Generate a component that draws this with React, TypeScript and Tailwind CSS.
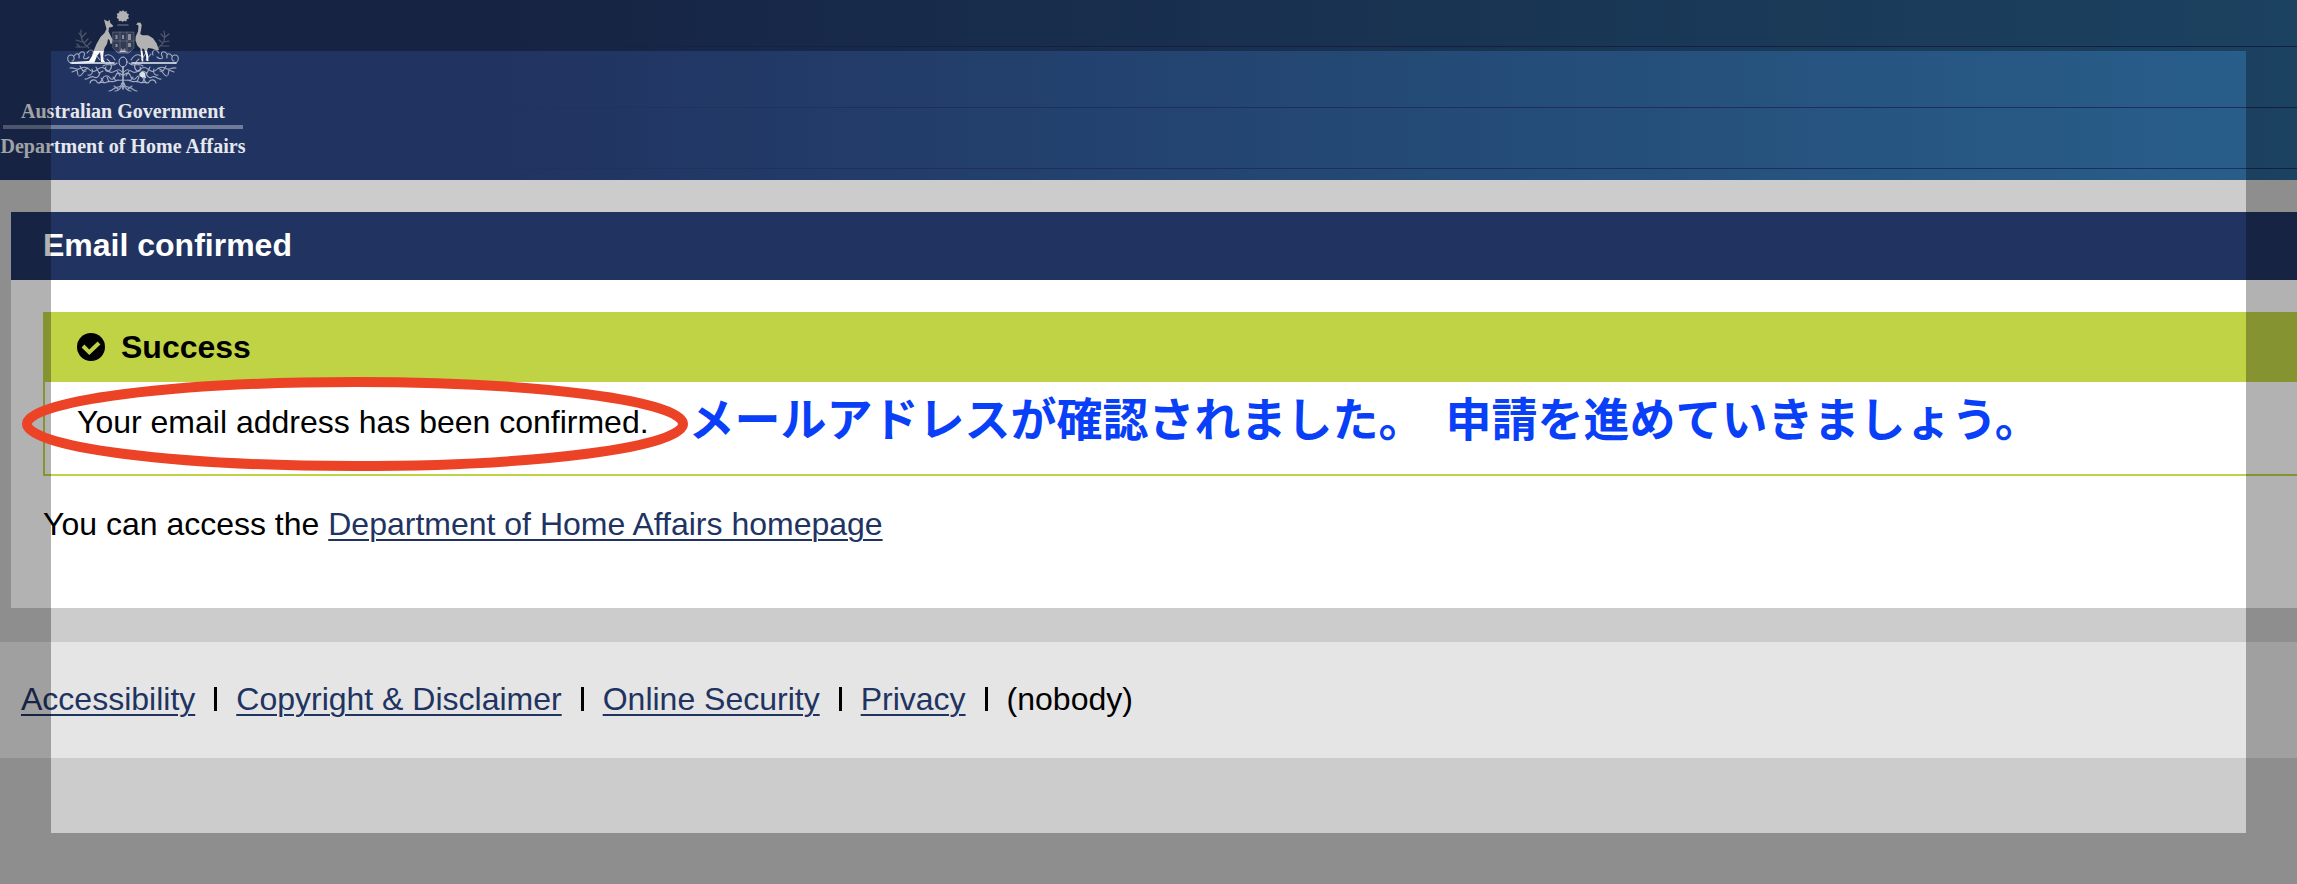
import React from "react";

const links = ["Accessibility", "Copyright & Disclaimer", "Online Security", "Privacy"];

/* One half of the wattle sprays under the shield; mirrored for the other side. */
function Wattle() {
  return (
    <g>
      <path d="M5 53c-5 0-6-8-1-8 4 0 4 6 1 6" />
      <path d="M7 46c3-4 6-2 5 2M12 44c3-4 7-2 5 2s3 3 5 1M20 43c3-5 8-3 6 2M28 44l5 6M33 43l4 6" />
      <path d="M38 46c4-3 8 0 10 4M36 56c5-4 9 2 14-3M40 49c4 3 6 8 3 11s-6 0-4-3" />
      <path d="M3 58c4-1 6 2 9 1s4-3 8-1 4 5 8 3 5-5 9-3 5 6 9 4 6-4 9 0" />
      <path d="M5 62l5-2 1 5M13 56l3 5 5-3M12 66c4 0 3-5 7-5M21 65c3 1 6-3 4-6M29 57l3 6 4-2M18 69c3 1 6-4 9-2s5-1 6-4" />
      <path d="M23 73c1-4 6-4 7-1s5-1 6-4 5-3 7 0 5 0 6-3 4-2 6 0" />
      <path d="M32 73c3-2 5 1 8-1s5 1 8-1 5 0 7-1M34 68l3 5M40 67l2 5M46 67l3 4M50 61l3 5" />
      <path d="M42 81c4 0 5-4 9-4s3-3 4-4M48 81c3 0 5-2 7-5M47 76l4 3" />
    </g>
  );
}

function Crest() {
  return (
    <svg viewBox="0 0 112 84" className="h-[84px] w-[112px]" fill="none" stroke="#dfe3ee" strokeLinecap="round" role="img" aria-label="Commonwealth coat of arms">
      <path fill="#fff" stroke="none" d="M56 0l1.300 1.800 2.200-.9.300 2.400 2.200.9-.9 2 .9 2.200-2.200.8-.4 2.300-2.200-.7-1.600 1.100-1.500-1.200-2.300.6-.2-2.400-2.100-1.100 1-1.900-.8-2.200 2.300-.7.600-2.200 2.200.8z" />
      <path strokeWidth="1.500" opacity=".5" d="M51 15h10" />
      <path fill="#8e95a8" fillOpacity=".35" strokeOpacity=".35" d="M46 22h21v16l-5 5H51l-5-5zM53 22v21M60 22v21M46 31h21" />
      <path fill="#fff" stroke="none" opacity=".7" d="M48.500 25h2v4h-2zM61 24h3v6h-3zM55 25h2v4h-2zM48.500 34h2v3h-2zM61 33h3v4h-3zM53 42l1-4 2 2 2-2 1 4z" />
      <path fill="#fff" stroke="none" d="M37 9.500l4 2 1.500-2 .8 3.500 2.700 2.500-.5 1.500-3.500.5-.5 4 2 4 2 4-.5 4-1.500.5-1-4-1.500-1-1 5-2.500 4-1 5-.5 6 2 3h-4l-.5-7-.5-3-3 4-2 5-1 2-22 1v-2l17-1 3-5 2-6 2.500-6 4-7 4-4 2-4z" />
      <path fill="#fff" stroke="none" d="M69 14.500l2-2 2.500.3 1.200 2.200-.7 5-.8 4 2.300 1.200 5.500 0 5 3 3.500 5 2.500 6.500-2 .8-5-2-4-.5-1 3 1 4 .5 6h-2l-.5-6-2-6-2-.5 1 6 .3 7h-1.600l-.7-7-.7-6-3-3-1.800-5 .2-4 2.300-5 .5-5-.5-1.500z" />
      <g strokeWidth="1.200" opacity=".42">
        <path d="M14 20c-1 8 2 14 8 18M15 27l-3-4M15 27l4-4M15 32l-6-2M17 33l4-4M19 37H9M20 36l4-4M13 37l-3-3" />
        <path d="M97 21c2 7 0 13-6 17M97 27l-3-3M98 27l4-3M96 33l-4-3M97 32l5-1M94 36h8" />
      </g>
      <path d="M4 53h43M65 53h44" strokeWidth="1.800" opacity=".8" />
      <ellipse cx="56" cy="52" rx="4" ry="5" opacity=".8" />
      <path d="M56 57v22" strokeWidth="1.500" opacity=".8" />
      <g strokeWidth="1.100" opacity=".68">
        <Wattle />
        <g transform="translate(112 0) scale(-1 1)">
          <Wattle />
        </g>
      </g>
      <path fill="#fff" stroke="none" opacity=".85" d="M75 61l3 2 1 5-5-1-2-3z" />
    </svg>
  );
}

function Header() {
  return (
    <header className="relative h-[180px] bg-linear-to-r from-[#213361] from-22% via-[#244a76] via-62% to-[#295f8b]">
      <div className="absolute inset-0 flex flex-col gap-[60px] pt-[46px]" aria-hidden="true">
        {[0, 1, 2].map((n) => (
          <div key={n} className="h-px shrink-0 bg-linear-to-r from-[#1f2e5c]/0 from-15% to-[#1f2e5c] to-40%" />
        ))}
      </div>
      <div className="relative ml-[3px] flex w-60 flex-col items-center pt-[10px] font-['Liberation_Serif',serif] text-[20px] font-bold whitespace-nowrap text-[#e6e8ee]">
        <Crest />
        <p className="mt-[7px] leading-5">Australian Government</p>
        <div className="mt-1 h-1 w-full bg-[#6f7b98]" />
        <p className="mt-[7px] leading-5">Department of Home Affairs</p>
      </div>
    </header>
  );
}

function Alert() {
  return (
    <section className="relative border-2 border-r-0 border-[#bfd345]">
      <h2 className="flex h-[68px] items-center gap-4 bg-[#bfd345] pb-0.5 pl-8 text-[32px] font-bold">
        <svg viewBox="0 0 28 28" className="size-7" aria-hidden="true">
          <circle cx="14" cy="14" r="14" />
          <path d="M6 13l6.300 6.300L22 10" fill="none" stroke="#bfd345" strokeWidth="4" />
        </svg>
        Success
      </h2>
      <div className="flex h-[92px] items-start pt-3 pl-8">
        <p className="pt-2 leading-[40px]">Your email address has been confirmed.</p>
        <p className="ml-10 font-['Noto_Sans_CJK_JP',sans-serif] text-[46px] leading-[44px] font-bold whitespace-pre text-[#0a3ff8]" lang="ja">
          {"メールアドレスが確認されました。  申請を進めていきましょう。"}
        </p>
      </div>
      <svg viewBox="0 0 668 96" className="absolute top-[62px] -left-6 z-10 h-24 w-[668px]" fill="none" aria-hidden="true">
        <ellipse cx="334" cy="48" rx="328" ry="42" stroke="#ec4226" strokeWidth="10" />
      </svg>
    </section>
  );
}

export default function App() {
  return (
    <div className="relative flow-root min-h-screen overflow-hidden bg-[#cccccc] font-['Liberation_Sans',Arial,sans-serif] text-[32px] text-black">
      <Header />
      <main className="mt-8 ml-[11px] bg-white">
        <h1 className="flex h-[68px] items-center bg-[#213361] pb-0.5 pl-8 font-bold text-white">Email confirmed</h1>
        <div className="pt-8 pb-16 pl-8">
          <Alert />
          <p className="mt-7 leading-[40px]">
            You can access the{" "}
            <a href="#home" className="text-[#213361] underline decoration-2 underline-offset-4">Department of Home Affairs homepage</a>
          </p>
        </div>
      </main>
      <footer className="mt-[34px] flex h-[116px] items-center bg-[#e5e5e5] pb-0.5 pl-[21px]">
        {links.map((label) => (
          <React.Fragment key={label}>
            <a href="#footer" className="text-[#213361] underline decoration-2 underline-offset-4">{label}</a>
            <span className="mx-[19px] h-6 w-[3px] bg-black" />
          </React.Fragment>
        ))}
        <span>(nobody)</span>
      </footer>
      <div className="pointer-events-none absolute inset-0 border-51 border-black/30" />
    </div>
  );
}
